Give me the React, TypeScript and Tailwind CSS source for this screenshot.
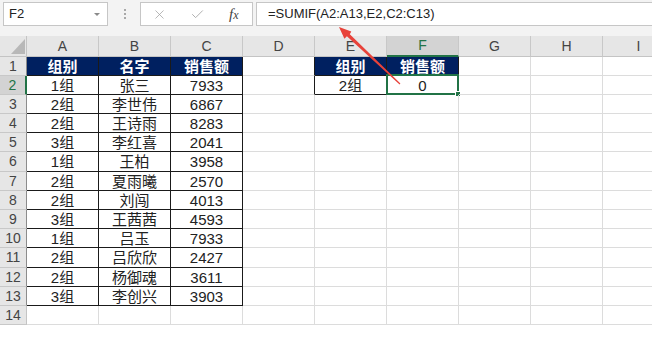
import { X, Check } from 'lucide-react'

const COLS = ['A', 'B', 'C', 'D', 'E', 'F', 'G', 'H', 'I']
const ROWS = Array.from({ length: 14 }, (_, i) => i + 1)

const data: Record<string, string> = {
  A1: '组别', B1: '名字', C1: '销售额', E1: '组别', F1: '销售额',
  E2: '2组', F2: '0',
}

const rows: [string, string, string][] = [
  ['1组', '张三', '7933'],
  ['2组', '李世伟', '6867'],
  ['2组', '王诗雨', '8283'],
  ['3组', '李红喜', '2041'],
  ['1组', '王柏', '3958'],
  ['2组', '夏雨曦', '2570'],
  ['2组', '刘闯', '4013'],
  ['3组', '王茜茜', '4593'],
  ['1组', '吕玉', '7933'],
  ['2组', '吕欣欣', '2427'],
  ['2组', '杨御魂', '3611'],
  ['3组', '李创兴', '3903'],
]
rows.forEach(([g, n, s], i) => {
  data[`A${i + 2}`] = g
  data[`B${i + 2}`] = n
  data[`C${i + 2}`] = s
})

// a couple of rows are a pixel taller, like the zoomed sheet
const tall = (r: number) => r === 6 || r === 11

function inTable(c: number, r: number) {
  if (c >= 0 && c <= 2 && r >= 1 && r <= 13) return true
  if (c >= 4 && c <= 5 && r >= 1 && r <= 2) return true
  return false
}

function Cell({ c, r }: { c: number; r: number }) {
  const key = `${COLS[c]}${r}`
  const text = data[key]
  const header = r === 1 && inTable(c, r)
  const right = inTable(c, r) || inTable(c + 1, r) ? 'border-r-[#1a1a1a]' : 'border-r-[#dcdcdc]'
  const bottom = inTable(c, r) || inTable(c, r + 1) ? 'border-b-[#1a1a1a]' : 'border-b-[#dcdcdc]'
  const selected = key === 'F2'
  return (
    <div
      className={`relative flex w-[72px] shrink-0 items-center justify-center border-r border-b text-[15px] leading-none ${
        tall(r) ? 'h-[20px]' : 'h-[19px]'
      } ${right} ${bottom} ${header ? 'bg-[#002060] font-bold text-white' : 'text-[#222]'}`}
    >
      {text}
      {selected && (
        <div className="absolute -top-[2px] -left-[1px] h-[21px] w-[73px] border-2 border-[#217346]">
          <div className="absolute -right-[4px] -bottom-[4px] h-[6px] w-[6px] border border-white bg-[#217346]" />
        </div>
      )}
    </div>
  )
}

export default function App() {
  return (
    <div className="relative h-[343px] w-[652px] overflow-hidden bg-white font-['Liberation_Sans','Noto_Sans_CJK_SC',sans-serif]">
      {/* formula bar */}
      <div className="flex h-[36px] items-start bg-[#f3f3f3] pt-[2px]">
        <div className="ml-[3px] flex h-[24px] w-[105px] items-center justify-between border border-[#c6c6c6] bg-white pr-[7px] pl-[5px] text-[13px] text-[#222]">
          <span>F2</span>
          <span className="h-0 w-0 border-x-[3px] border-t-[3px] border-x-transparent border-t-[#8a8a8a]" />
        </div>
        <div className="flex h-[24px] w-[32px] flex-col items-center justify-center gap-[2px] pl-[1px]">
          <span className="h-[2px] w-[2px] bg-[#a8a8a8]" />
          <span className="h-[2px] w-[2px] bg-[#a8a8a8]" />
          <span className="h-[2px] w-[2px] bg-[#a8a8a8]" />
        </div>
        <div className="flex h-[24px] w-[113px] items-center border border-[#c6c6c6] bg-white">
          <X size={15} strokeWidth={1.2} className="ml-[11px] text-[#a0a0a0]" />
          <Check size={15} strokeWidth={1.6} className="ml-[23px] text-[#b0b0b0]" />
          <span className="ml-[24px] font-['Liberation_Serif',serif] text-[15px] text-[#444] italic">
            f<span className="text-[12px]">x</span>
          </span>
        </div>
        <div className="ml-[3px] flex h-[24px] flex-1 items-center border border-r-0 border-[#c6c6c6] bg-white pl-[11px] text-[13px] text-[#222]">
          =SUMIF(A2:A13,E2,C2:C13)
        </div>
      </div>

      {/* column headers */}
      <div className="flex h-[21px] bg-[#e6e6e6]">
        <div className="relative w-[27px] shrink-0 border-r border-b border-[#c4c4c4]">
          <svg className="absolute top-[3px] left-[11px]" width="14" height="15" viewBox="0 0 14 15">
            <polygon points="14,0 14,15 0,15" fill="#b8b8b8" />
          </svg>
        </div>
        {COLS.map((col) => (
          <div
            key={col}
            className={`flex w-[72px] shrink-0 items-center justify-center border-r border-[#c8c8c8] text-[14px] ${
              col === 'F'
                ? 'border-b-2 border-b-[#217346] bg-[#d3d3d3] text-[#217346]'
                : 'border-b border-b-[#c4c4c4] text-[#444]'
            }`}
          >
            {col}
          </div>
        ))}
      </div>

      {/* rows */}
      {ROWS.map((r) => (
        <div key={r} className="flex">
          <div
            className={`flex w-[27px] shrink-0 items-center justify-center border-b border-[#c8c8c8] text-[14px] ${
              tall(r) ? 'h-[20px]' : 'h-[19px]'
            } ${
              r === 2
                ? 'border-r-2 border-r-[#217346] bg-[#d3d3d3] text-[#217346]'
                : `border-r bg-[#e6e6e6] text-[#444] ${r <= 13 ? 'border-r-[#8c8c8c]' : 'border-r-[#c4c4c4]'}`
            }`}
          >
            {r}
          </div>
          {COLS.map((_, c) => (
            <Cell key={c} c={c} r={r} />
          ))}
        </div>
      ))}

      {/* red arrow annotation */}
      <svg className="pointer-events-none absolute top-0 left-0" width="652" height="343">
        <polygon
          points="400.4,83.6 349.8,34.3 351.3,31.6 339,27 344.4,38.8 346.9,36.3 399.6,84.4"
          fill="#e8423a"
        />
      </svg>
    </div>
  )
}
